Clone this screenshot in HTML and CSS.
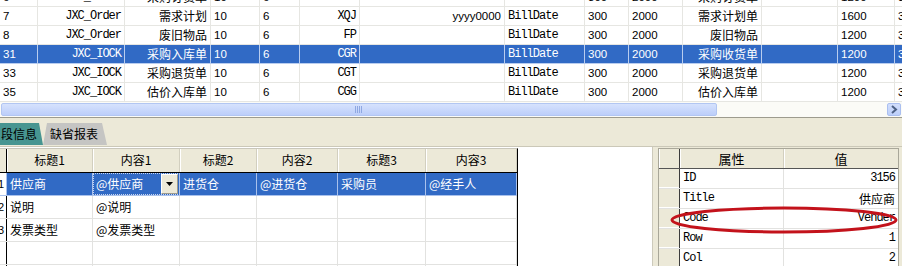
FILE: index.html
```html
<!DOCTYPE html>
<html lang="zh-CN">
<head>
  <meta charset="UTF-8" />
  <meta name="viewport" content="width=device-width, initial-scale=1.0" />
  <title>单据字段设置</title>
  <link rel="stylesheet" href="styles.css">
</head>
<body>
<div class="screen">

  <div class="bill-grid">
    <div class="bill-rows">
      <div class="brow partial">
        <span class="n">6</span><span class="m r">JXC_Order</span><span class="r">采购订货单</span><span class="n">10</span><span class="n">6</span><span class="m r">CGD</span><span></span><span class="m">BillDate</span><span class="n">300</span><span class="n">2000</span><span class="r">采购订货单</span><span></span><span class="n">1200</span><span class="n">3</span>
      </div>
      <div class="brow">
        <span class="n">7</span><span class="m r">JXC_Order</span><span class="r">需求计划</span><span class="n">10</span><span class="n">6</span><span class="m r">XQJ</span><span class="n r">yyyy0000</span><span class="m">BillDate</span><span class="n">300</span><span class="n">2000</span><span class="r">需求计划单</span><span></span><span class="n">1600</span><span class="n">3</span>
      </div>
      <div class="brow">
        <span class="n">8</span><span class="m r">JXC_Order</span><span class="r">废旧物品</span><span class="n">10</span><span class="n">6</span><span class="m r">FP</span><span></span><span class="m">BillDate</span><span class="n">300</span><span class="n">2000</span><span class="r">废旧物品</span><span></span><span class="n">1200</span><span class="n">3</span>
      </div>
      <div class="brow sel">
        <span class="n">31</span><span class="m r">JXC_IOCK</span><span class="r">采购入库单</span><span class="n">10</span><span class="n">6</span><span class="m r">CGR</span><span></span><span class="m">BillDate</span><span class="n">300</span><span class="n">2000</span><span class="r">采购收货单</span><span></span><span class="n">1200</span><span class="n">3</span>
      </div>
      <div class="brow">
        <span class="n">33</span><span class="m r">JXC_IOCK</span><span class="r">采购退货单</span><span class="n">10</span><span class="n">6</span><span class="m r">CGT</span><span></span><span class="m">BillDate</span><span class="n">300</span><span class="n">2000</span><span class="r">采购退货单</span><span></span><span class="n">1200</span><span class="n">3</span>
      </div>
      <div class="brow">
        <span class="n">35</span><span class="m r">JXC_IOCK</span><span class="r">估价入库单</span><span class="n">10</span><span class="n">6</span><span class="m r">CGG</span><span></span><span class="m">BillDate</span><span class="n">300</span><span class="n">2000</span><span class="r">估价入库单</span><span></span><span class="n">1200</span><span class="n">3</span>
      </div>
    </div>
    <div class="hscroll">
      <div class="thumb"><span class="grip"></span></div>
      <div class="track"></div>
      <div class="arrow">
        <svg width="8" height="9" viewBox="0 0 8 9"><path d="M2 1 L6 4.5 L2 8" fill="none" stroke="#4d6185" stroke-width="2"/></svg>
      </div>
    </div>
  </div>

  <div class="tabbar">
    <div class="tab active">段信息</div>
    <div class="tab other">缺省报表</div>
  </div>

  <div class="bottom">
    <div class="field-panel">
      <div class="fgrid">
        <div class="frow head">
          <span class="ind"></span><span>标题1</span><span>内容1</span><span>标题2</span><span>内容2</span><span>标题3</span><span>内容3</span>
        </div>
        <div class="frow sel">
          <span class="ind">1</span><span>供应商</span>
          <span class="combo"><em>@供应商</em><i class="drop"><svg width="7" height="4" viewBox="0 0 7 4"><path d="M0 0 H7 L3.5 4 Z" fill="#000"/></svg></i></span>
          <span>进货仓</span><span>@进货仓</span><span>采购员</span><span>@经手人</span>
        </div>
        <div class="frow">
          <span class="ind">2</span><span>说明</span><span>@说明</span><span></span><span></span><span></span><span></span>
        </div>
        <div class="frow">
          <span class="ind">3</span><span>发票类型</span><span>@发票类型</span><span></span><span></span><span></span><span></span>
        </div>
        <div class="frow">
          <span class="ind"></span><span></span><span></span><span></span><span></span><span></span><span></span>
        </div>
        <div class="frow">
          <span class="ind"></span><span></span><span></span><span></span><span></span><span></span><span></span>
        </div>
      </div>
    </div>

    <div class="splitter"></div>

    <div class="prop-panel">
      <div class="pgrid">
        <div class="prow head"><span class="ind"></span><span>属性</span><span>值</span></div>
        <div class="prow"><span class="ind"></span><span class="m">ID</span><span class="m r">3156</span></div>
        <div class="prow"><span class="ind"></span><span class="m">Title</span><span class="r">供应商</span></div>
        <div class="prow"><span class="ind"></span><span class="m">Code</span><span class="m r">Vender</span></div>
        <div class="prow"><span class="ind"></span><span class="m">Row</span><span class="m r">1</span></div>
        <div class="prow"><span class="ind"></span><span class="m">Col</span><span class="m r">2</span></div>
      </div>
      <svg class="mark" width="236" height="30" viewBox="0 0 236 30">
        <ellipse cx="118" cy="15" rx="112" ry="12" fill="none" stroke="#c3121b" stroke-width="3"/>
      </svg>
    </div>
  </div>

</div>
</body>
</html>
```

FILE: styles.css
```css
* {
  box-sizing: border-box;
}
body {
  margin: 0;
  background: #ece9d8;
  font-family: "Liberation Sans", "Noto Sans CJK SC", sans-serif;
  font-size: 12px;
  color: #000;
}
.screen {
  width: 902px;
  height: 266px;
  overflow: hidden;
  background: #ece9d8;
}

/* top bill grid */
.bill-grid {
  background: #fff;
}
.bill-rows {
  height: 102px;
  overflow: hidden;
}
.brow {
  display: grid;
  grid-template-columns: 38px 87px 86px 49px 40px 60px 145px 80px 44px 54px 79px 76px 57px 40px;
  width: 935px;
  height: 19px;
  border-bottom: 1px solid #e6e6e2;
}
.brow.partial {
  margin-top: -12px;
}
.brow > span {
  padding: 0 3px;
  border-right: 1px solid #e6e6e2;
  line-height: 18px;
  white-space: nowrap;
  overflow: hidden;
  font-family: "Noto Sans CJK SC", sans-serif;
}
.brow.sel {
  background: #316ac5;
  color: #fff;
  border-bottom-color: #b9cdef;
}
.brow.sel > span {
  border-right-color: #b9cdef;
}
.brow > .r {
  text-align: right;
}
.m {
  font-family: "Liberation Mono", "Noto Sans CJK SC", monospace !important;
  font-size: 12px;
  letter-spacing: -1px;
}
.n {
  font-family: "Liberation Sans", sans-serif !important;
  font-size: 11.5px;
}

.hscroll {
  display: flex;
  height: 16px;
  padding: 1px;
  background: #fbfbf7;
  border-bottom: 1px solid #9d9b8e;
}
.thumb {
  width: 716px;
  height: 13px;
  border: 1px solid #b2c6f2;
  border-radius: 2px;
  background: linear-gradient(#d6e2fd, #bccefa);
  display: flex;
  justify-content: center;
  align-items: center;
}
.grip {
  width: 8px;
  height: 7px;
  background: repeating-linear-gradient(90deg, #8fa8e2 0 1px, transparent 1px 2px);
}
.track {
  flex: 1;
}
.arrow {
  width: 14px;
  height: 13px;
  border: 1px solid #aabff0;
  border-radius: 2px;
  background: linear-gradient(#d2defc, #bccffa);
  display: flex;
  align-items: center;
  justify-content: center;
}

/* tabs */
.tabbar {
  display: flex;
  height: 29px;
  padding-top: 5px;
  border-bottom: 1px solid #cbc8b8;
}
.tab {
  height: 22px;
  line-height: 22px;
  font-family: "Noto Sans CJK SC", sans-serif;
  font-size: 12px;
}
.tab.active {
  width: 43px;
  padding-left: 1px;
  background: #479591;
  clip-path: polygon(0 0, 39px 0, 43px 100%, 0 100%);
}
.tab.other {
  width: 64px;
  padding-left: 7px;
  background: #c5c5c3;
  clip-path: polygon(4px 0, 59px 0, 64px 100%, 0 100%);
}

/* bottom panels */
.bottom {
  display: flex;
  height: 119px;
}
.field-panel {
  width: 652px;
  background: #fff;
  padding-top: 1px;
  overflow: hidden;
}
.fgrid {
  width: 529px;
  margin-left: -11px;
  border-top: 1px solid #c9c7bb;
  border-right: 1px solid #000;
}
.frow {
  display: grid;
  grid-template-columns: 18px 86px 87px 77px 81px 88px 91px;
  height: 23px;
  border-bottom: 1px solid #e2e2e0;
}
.frow > span {
  padding-left: 3px;
  border-right: 1px solid #e2e2e0;
  line-height: 22px;
  white-space: nowrap;
  overflow: hidden;
  font-family: "Noto Sans CJK SC", sans-serif;
}
.frow > .ind {
  padding: 0 2px 0 0;
  text-align: right;
  border-right: 1px solid #000;
  background: #fff;
  color: #000;
  font-family: "Liberation Sans", sans-serif;
  font-size: 11px;
}
.frow.head {
  height: 24px;
  background: #ece9d8;
  border-bottom: 1px solid #000;
}
.frow.head > span {
  text-align: center;
  padding-left: 0;
  border-right-color: #d2cfbf;
  box-shadow: inset 1px 0 #fff;
}
.frow.head > .ind {
  background: #ece9d8;
  border-right-color: #000;
}
.frow.sel {
  background: #316ac5;
  color: #fff;
  border-bottom-color: #a9c1ec;
}
.frow.sel > span {
  border-right-color: #a9c1ec;
}
.combo {
  display: flex;
  padding: 0 !important;
  border: 1px dotted #c8d6f0;
}
.combo em {
  flex: 1;
  font-style: normal;
  padding-left: 2px;
  line-height: 20px;
}
.drop {
  width: 17px;
  height: 20px;
  margin-right: 1px;
  background: #ece9d8;
  border: 1px solid;
  border-color: #fff #9d9b8e #9d9b8e #fff;
  display: flex;
  align-items: center;
  justify-content: center;
}

.splitter {
  width: 6px;
  border-left: 1px solid #cdcabb;
}

.prop-panel {
  position: relative;
  flex: 1;
  padding-top: 1px;
}
.pgrid {
  width: 241px;
  border: 1px solid #a9a799;
  background: #fff;
}
.prow {
  display: grid;
  grid-template-columns: 21px 104px 114px;
  height: 20px;
  border-bottom: 1px solid #e2e2e0;
}
.prow > span {
  padding: 0 3px;
  border-right: 1px solid #e2e2e0;
  line-height: 19px;
  white-space: nowrap;
  overflow: hidden;
  font-family: "Noto Sans CJK SC", sans-serif;
}
.prow > .r {
  text-align: right;
}
.prow > span:last-child {
  border-right: none;
}
.prow > .ind {
  background: #ece9d8;
  border-right: 1px solid #3c3c3c;
  box-shadow: inset 0 -1px #fff;
}
.prow.head {
  background: #ece9d8;
  border-bottom: 1px solid #555;
}
.prow.head > span {
  text-align: center;
  font-size: 13px;
  border-right-color: #d2cfbf;
  box-shadow: inset 1px 0 #fff;
}
.prow.head > .ind {
  border-right-color: #3c3c3c;
}
.mark {
  position: absolute;
  left: 8px;
  top: 58px;
  filter: blur(0.5px);
}
```
